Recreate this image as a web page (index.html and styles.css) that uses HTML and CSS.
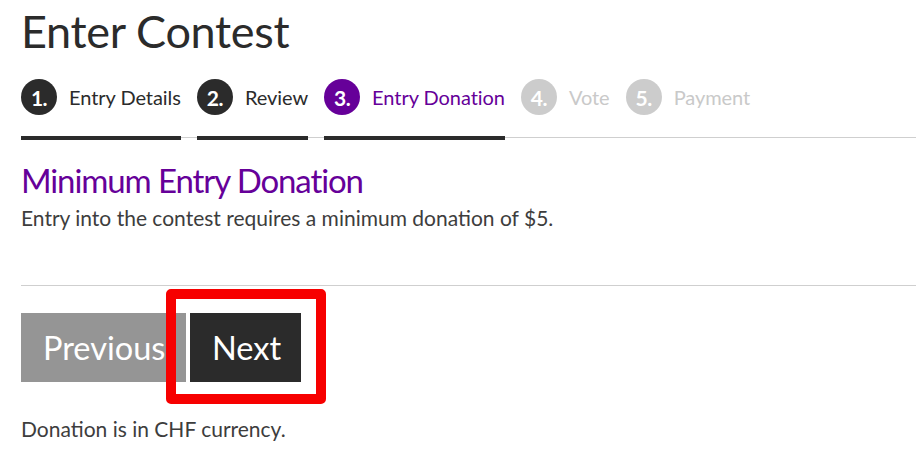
FILE: index.html
```html
<!DOCTYPE html>
<html lang="en">
<head>
<meta charset="utf-8">
<title>Enter Contest</title>
<link rel="stylesheet" href="styles.css">
</head>
<body>
<main class="page">
  <h1 class="title">Enter Contest</h1>
  <ol class="steps">
    <li class="step done"><span class="num">1.</span><span class="label">Entry Details</span></li>
    <li class="step done"><span class="num">2.</span><span class="label">Review</span></li>
    <li class="step current"><span class="num">3.</span><span class="label">Entry Donation</span></li>
    <li class="step todo"><span class="num">4.</span><span class="label">Vote</span></li>
    <li class="step todo"><span class="num">5.</span><span class="label">Payment</span></li>
  </ol>
  <section class="donation">
    <h2 class="subtitle">Minimum Entry Donation</h2>
    <p class="text">Entry into the contest requires a minimum donation of $5.</p>
  </section>
  <div class="actions">
    <button class="btn btn-prev">Previous</button>
    <button class="btn btn-next">Next</button>
    <span class="highlight"></span>
  </div>
  <p class="text note">Donation is in CHF currency.</p>
</main>
</body>
</html>
```
FILE: styles.css
```css
* { box-sizing: border-box; }
html, body { margin: 0; padding: 0; background: #fff; }
body {
  font-family: Lato, "Open Sans", sans-serif;
  color: #2b2b2b;
}
.page {
  padding: 0 0 0 21px;
}
.title {
  margin: 0;
  padding-top: 5px;
  font-size: 45px;
  font-weight: 400;
  line-height: 52px;
  color: #2b2b2b;
  letter-spacing: -0.3px;
}
.steps {
  list-style: none;
  margin: 22px 0 0 0;
  padding: 0;
  display: flex;
  gap: 16px;
  border-bottom: 1px solid #cfcfcf;
}
.step {
  display: flex;
  align-items: center;
  gap: 12px;
  padding-bottom: 21px;
  margin-bottom: -3px;
  border-bottom: 4px solid transparent;
}
.step .num {
  width: 36px;
  height: 36px;
  border-radius: 50%;
  display: flex;
  align-items: center;
  justify-content: center;
  color: #fff;
  font-weight: 700;
  font-size: 21px;
  letter-spacing: -0.5px;
}
.step .label {
  font-size: 20px;
  letter-spacing: -0.05px;
}
.step.done { border-bottom-color: #2b2b2b; }
.step.done .num { background: #2b2b2b; }
.step.done .label { color: #2b2b2b; }
.step.current { border-bottom-color: #2b2b2b; }
.step.current .num { background: #660099; }
.step.current .label { color: #660099; }
.step.todo .num { background: #cccccc; }
.step.todo .label { color: #c9c9c9; }

.donation {
  padding: 23px 0 0;
  height: 148px;
  border-bottom: 1px solid #cfcfcf;
}
.subtitle {
  margin: 0 0 5px;
  font-size: 33px;
  line-height: 38px;
  font-weight: 400;
  color: #660099;
  letter-spacing: -1.1px;
}
.text {
  margin: 0;
  font-size: 21px;
  line-height: 28px;
  color: #3d3d3d;
}
.actions {
  position: relative;
  display: flex;
  gap: 4px;
  margin-top: 27px;
}
.btn {
  border: 0;
  height: 69px;
  padding: 0 22px;
  font-family: Lato, "Open Sans", sans-serif;
  font-size: 32.5px;
  color: #fff;
  cursor: pointer;
}
.btn-prev { background: #959595; width: 165px; }
.btn-next { background: #2b2b2b; width: 111px; }
.highlight {
  position: absolute;
  left: 145px;
  top: -24px;
  width: 160px;
  height: 115px;
  border: 10px solid #f70000;
  border-radius: 5px;
}
.note {
  margin-top: 33px;
}
```
